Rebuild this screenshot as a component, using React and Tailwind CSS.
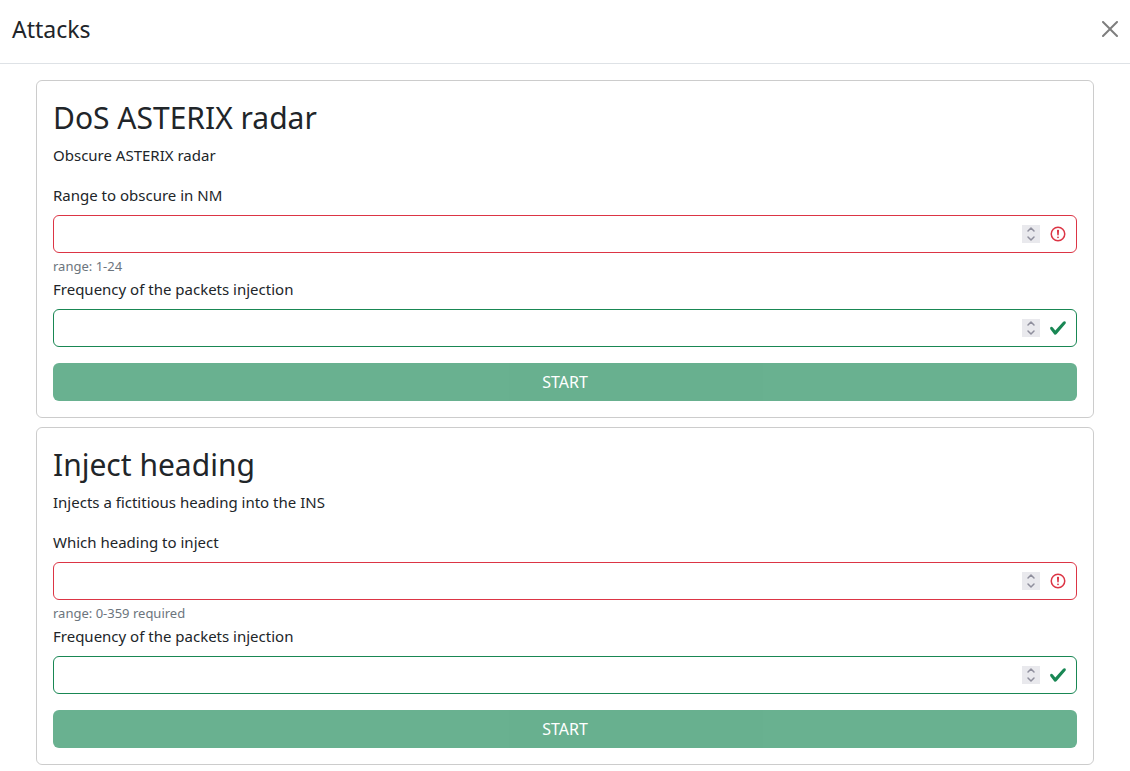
import { useId, useRef } from "react";
import clsx from "clsx";

const attacks = [
  {
    title: "DoS ASTERIX radar",
    description: "Obscure ASTERIX radar",
    fields: [
      { label: "Range to obscure in NM", hint: "range: 1-24", min: 1, max: 24, valid: false },
      { label: "Frequency of the packets injection", valid: true },
    ],
  },
  {
    title: "Inject heading",
    description: "Injects a fictitious heading into the INS",
    fields: [
      { label: "Which heading to inject", hint: "range: 0-359 required", min: 0, max: 359, valid: false },
      { label: "Frequency of the packets injection", valid: true },
    ],
  },
];

function CloseIcon() {
  return (
    <svg viewBox="0 0 16 16" className="size-4" fill="currentColor" aria-hidden="true">
      <path d="M.293.293a1 1 0 0 1 1.414 0L8 6.586 14.293.293a1 1 0 1 1 1.414 1.414L9.414 8l6.293 6.293a1 1 0 0 1-1.414 1.414L8 9.414l-6.293 6.293a1 1 0 0 1-1.414-1.414L6.586 8 .293 1.707a1 1 0 0 1 0-1.414z" />
    </svg>
  );
}

function InvalidIcon() {
  return (
    <svg viewBox="0 0 12 12" className="size-[18px] shrink-0" fill="none" stroke="#dc3545" aria-hidden="true">
      <circle cx="6" cy="6" r="4.5" />
      <path strokeLinejoin="round" d="M5.8 3.6h.4L6 6.5z" />
      <circle cx="6" cy="8.2" r=".6" fill="#dc3545" stroke="none" />
    </svg>
  );
}

function ValidIcon() {
  return (
    <svg viewBox="0 0 8 8" className="size-[18px] shrink-0" fill="#198754" aria-hidden="true">
      <path d="M2.3 6.73.6 4.53c-.4-1.04.46-1.4 1.1-.8l1.1 1.4 3.4-3.8c.6-.63 1.6-.27 1.2.7l-4 4.6c-.43.5-.8.4-1.1.1z" />
    </svg>
  );
}

function Chevron({ d }) {
  return (
    <svg viewBox="0 0 18 9" className="h-[9px] w-[18px]" fill="none" stroke="#8f8f9d" strokeWidth="1.5" strokeLinecap="round" strokeLinejoin="round" aria-hidden="true">
      <path d={d} />
    </svg>
  );
}

function NumberField({ label, hint, min, max, valid }) {
  const id = useId();
  const input = useRef(null);
  return (
    <div>
      <label htmlFor={id} className="mb-2 block">
        {label}
      </label>
      <div className={clsx("flex h-[38px] items-center gap-[9px] rounded-md border bg-white pr-[9px] pl-3", valid ? "border-[#198754]" : "border-[#dc3545]")}>
        <input
          id={id}
          ref={input}
          type="number"
          min={min}
          max={max}
          aria-invalid={!valid}
          className="min-w-0 flex-1 bg-transparent outline-none [appearance:textfield] [&::-webkit-inner-spin-button]:appearance-none"
        />
        <span className="flex flex-col bg-[#e9e9ed]">
          <button type="button" tabIndex={-1} aria-label="Increase" onClick={() => input.current.stepUp()}>
            <Chevron d="M6 6 9 3l3 3" />
          </button>
          <button type="button" tabIndex={-1} aria-label="Decrease" onClick={() => input.current.stepDown()}>
            <Chevron d="M6 3 9 6l3-3" />
          </button>
        </span>
        {valid ? <ValidIcon /> : <InvalidIcon />}
      </div>
      {hint && <p className="pt-0.5 text-[13px]/[22px] text-[#6c757d]">{hint}</p>}
    </div>
  );
}

function AttackCard({ title, description, fields }) {
  return (
    <form className="rounded-md border border-black/20 p-4" onSubmit={(e) => e.preventDefault()}>
      <h2 className="mb-1 text-[30px]/[42px]">{title}</h2>
      <p className="mb-4">{description}</p>
      {fields.map((field) => (
        <NumberField key={field.label} {...field} />
      ))}
      <button type="submit" disabled className="mt-4 h-[38px] w-full rounded-md bg-[#198754] text-base text-white opacity-65">
        START
      </button>
    </form>
  );
}

export default function App() {
  return (
    <div className="min-h-screen bg-white font-['Noto_Sans',sans-serif] text-[15px]/6 text-[#212529]">
      <header className="flex items-center justify-between border-b border-[#dee2e6] px-3 pt-[11px] pb-4">
        <h1 className="text-[23px]/9">Attacks</h1>
        <button type="button" aria-label="Close" className="text-black opacity-50">
          <CloseIcon />
        </button>
      </header>
      <main className="flex flex-col gap-[9px] px-9 pt-4 pb-1">
        {attacks.map((attack) => (
          <AttackCard key={attack.title} {...attack} />
        ))}
      </main>
    </div>
  );
}
